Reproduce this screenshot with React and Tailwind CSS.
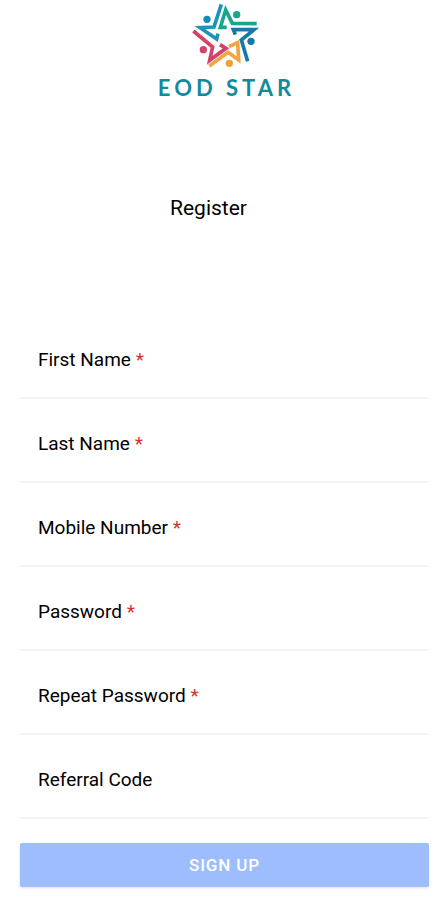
import React, { useState } from 'react';

const FIELDS = [
  { id: 'firstName', label: 'First Name', type: 'text', required: true },
  { id: 'lastName', label: 'Last Name', type: 'text', required: true },
  { id: 'mobile', label: 'Mobile Number', type: 'tel', required: true },
  { id: 'password', label: 'Password', type: 'password', required: true },
  { id: 'repeatPassword', label: 'Repeat Password', type: 'password', required: true },
  { id: 'referralCode', label: 'Referral Code', type: 'text', required: false },
];

function StarLogo() {
  return (
    <svg viewBox="0 0 240 216" className="w-20 h-18" fill="none" strokeWidth="11" aria-hidden="true">
      <path d="M109 13 L87 81 L45 83 L95 117 L99 101" stroke="#1e93b8" />
      <circle cx="66" cy="58" r="11" fill="#1689b4" />
      <path d="M125 82 L106 82 L122 30 L142 70 L215 71" stroke="#19a68c" />
      <circle cx="155" cy="44" r="11" fill="#1fa48f" />
      <path d="M151 104 L145 89 L207 89 L169 120 L188 184" stroke="#1678ab" />
      <circle cx="198" cy="124" r="11" fill="#1678ab" />
      <path d="M73 198 L129 157 L161 180 L158 128 L132 140" stroke="#f0a743" />
      <circle cx="133" cy="190" r="11" fill="#ee9f3c" />
      <path d="M25 93 L83 141 L74 181 L123 145 L105 134" stroke="#d2426a" />
      <circle cx="55" cy="149" r="11" fill="#d2426a" />
    </svg>
  );
}

export default function App() {
  const [form, setForm] = useState({});

  const handleChange = (e) => {
    const { name, value } = e.target;
    setForm(prev => ({ ...prev, [name]: value }));
  };

  const handleSubmit = (e) => {
    e.preventDefault();
  };

  return (
    <div className="min-h-screen bg-white pl-5 pr-4 pb-3 text-black font-['Roboto',sans-serif]">
      <header className="flex flex-col items-center">
        <StarLogo />
        <div className="pl-1 text-[22px] leading-8 font-bold tracking-[4px] text-[#128a9e] font-['Lato',sans-serif]">
          EOD STAR
        </div>
      </header>

      <h1 className="mt-22 pr-8 text-center text-[21px] leading-8">Register</h1>

      <form onSubmit={handleSubmit} className="mt-[91px]">
        {FIELDS.map(field => (
          <div key={field.id} className="flex items-center h-21 pl-[18px] pt-2 border-b-2 border-[#f3f3f3]">
            <label htmlFor={field.id} className="shrink-0 text-[19px] leading-7">
              {field.label}
              {field.required && <span className="text-[#d9302f]"> *</span>}
            </label>
            <input
              id={field.id}
              name={field.id}
              type={field.type}
              required={field.required}
              value={form[field.id] || ''}
              onChange={handleChange}
              className="flex-1 min-w-0 h-12 px-3 text-[19px] bg-transparent outline-none"
            />
          </div>
        ))}

        <button
          type="submit"
          className="mt-6 w-full h-11 rounded-xs bg-[#9dbdff] text-[17px] leading-6 font-medium tracking-wider text-white shadow-sm"
        >
          SIGN UP
        </button>
      </form>
    </div>
  );
}
